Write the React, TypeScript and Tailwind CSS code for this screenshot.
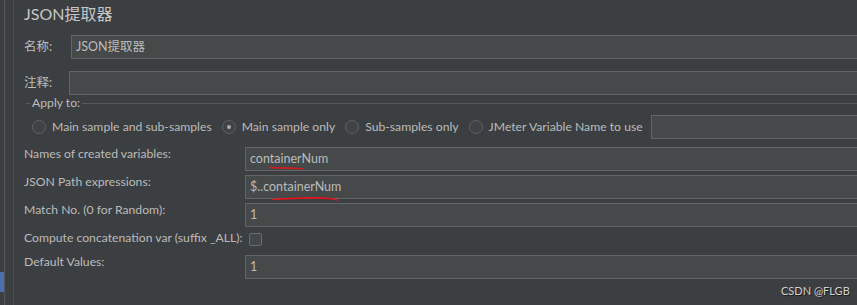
import React from 'react'

const FONT = 'Lato, "Noto Sans CJK SC", sans-serif'

function Field({ value, className = '' }: { value?: string; className?: string }) {
  return (
    <div
      className={`h-[24px] flex-1 flex items-center border-y border-l border-[#646464] bg-[#45494a] pl-[4px] text-[12.5px] text-[#bbbbbb] ${className}`}
    >
      {value}
    </div>
  )
}

function Radio({ label, checked = false }: { label: string; checked?: boolean }) {
  return (
    <div className="flex items-center gap-[6px]">
      <span className="w-[14px] h-[14px] rounded-full border border-[#5d6162] bg-[#3f4344] flex items-center justify-center">
        {checked && <span className="w-[4px] h-[4px] rounded-full bg-[#a9abad]" />}
      </span>
      <span>{label}</span>
    </div>
  )
}

function Row({ label, children, className = '' }: { label: string; children: React.ReactNode; className?: string }) {
  return (
    <div className={`flex items-start ${className}`}>
      <div className="w-[221px] leading-[14px] whitespace-nowrap">{label}</div>
      {children}
    </div>
  )
}

export default function App() {
  return (
    <div
      className="relative w-[857px] h-[305px] overflow-hidden bg-[#3c3f41] text-[#bbbbbb] text-[12.2px] flex"
      style={{ fontFamily: FONT }}
    >
      {/* gutter */}
      <div className="w-[4px] flex flex-col">
        <div className="h-[272px]" />
        <div className="h-[20px] bg-[#4b6eaf]" />
      </div>
      <div className="w-px bg-[#54585a]" />
      <div className="w-[8px]" />
      <div className="w-px bg-[#4a4e50]" />

      <div className="flex-1 pl-[10px] flex flex-col">
        <div className="h-[28px] leading-[28px] text-[16px] text-[#c6c6c6]">JSON提取器</div>

        <div className="mt-[7px] flex items-center">
          <div className="w-[47px] text-[12.5px]">名称:</div>
          <Field value="JSON提取器" />
        </div>

        <div className="mt-[12px] flex items-center">
          <div className="w-[45px] text-[12.5px]">注释:</div>
          <Field />
        </div>

        {/* Apply to group */}
        <div className="mt-[1px] h-[14px] flex items-center">
          <div className="w-[2px]" />
          <div className="w-[4px] h-px bg-[#56595b]" />
          <span className="px-[2px] leading-[14px]">Apply to:</span>
          <div className="flex-1 h-px bg-[#56595b]" />
        </div>

        <div className="mt-[5px] h-[24px] flex items-center pl-[8px] gap-[10px] whitespace-nowrap">
          <Radio label="Main sample and sub-samples" />
          <Radio label="Main sample only" checked />
          <Radio label="Sub-samples only" />
          <Radio label="JMeter Variable Name to use" />
          <Field className="ml-[-2px]" />
        </div>

        <Row label="Names of created variables:" className="mt-[8px]">
          <Field value="containerNum" />
        </Row>
        <Row label="JSON Path expressions:" className="mt-[4px]">
          <Field value="$..containerNum" />
        </Row>
        <Row label="Match No. (0 for Random):" className="mt-[4px]">
          <Field value="1" />
        </Row>
        <div className="mt-[4px] flex items-start">
          <div className="w-[225px] leading-[14px] whitespace-nowrap">Compute concatenation var (suffix _ALL):</div>
          <span className="mt-[2px] w-[13px] h-[13px] rounded-[2px] border border-[#686b6d] bg-[#43474a]" />
        </div>
        <Row label="Default Values:" className="mt-[9px]">
          <Field value="1" />
        </Row>
      </div>

      {/* red annotation strokes */}
      <svg className="absolute left-0 top-0 pointer-events-none" width="857" height="305">
        <path d="M270 167.5 C282 168.5 292 167.5 302 169" stroke="#e0141a" strokeWidth="1.6" fill="none" strokeLinecap="round" />
        <path d="M273 199.5 C292 198 315 197.5 331 198.5 L337 200" stroke="#e0141a" strokeWidth="1.6" fill="none" strokeLinecap="round" />
      </svg>

      <div
        className="absolute left-[781px] top-[284px] text-[11px] leading-[14px] text-[#d0d0d0]"
        style={{ textShadow: '1px 1px 1px rgba(0,0,0,0.6)' }}
      >
        CSDN @FLGB
      </div>
    </div>
  )
}
